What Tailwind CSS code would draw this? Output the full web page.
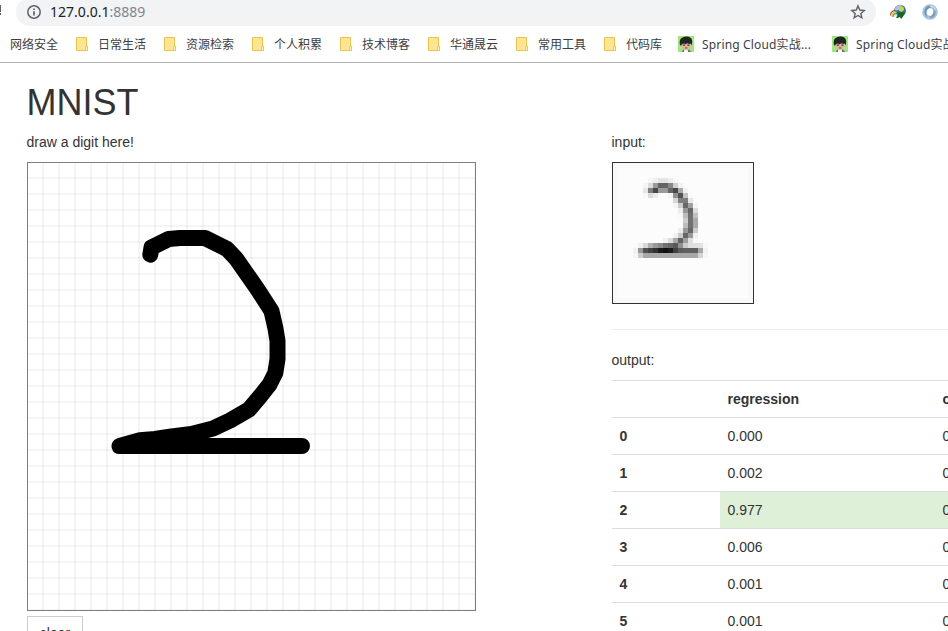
<!DOCTYPE html>
<html lang="zh-CN">
<head>
<meta charset="utf-8">
<title>MNIST</title>
<script src="https://cdn.jsdelivr.net/npm/@tailwindcss/browser@4"></script>
</head>
<body class="w-[948px] h-[631px] overflow-hidden bg-white text-[#333] font-['Liberation_Sans',Arial,sans-serif]">
<svg class="hidden">
  <symbol id="folder" viewBox="0 0 12 14"><path d="M.5.5h10v9h1v4H.5z" fill="#ffe591" stroke="#e8c64c"/><path d="M9.5 9.5h2v4h-2z" fill="#fff0b8" stroke="#e8c64c" stroke-width=".8"/></symbol>
  <symbol id="avatar" viewBox="0 0 16 16">
    <path d="M0 0h16v16H0z" fill="#a0e87c"/>
    <path d="M4 16c.4-2.2 1.5-3 4-3s4.300.8 5 3z" fill="#68788c"/>
    <path d="M6.500 13h3l.5 3H6z" fill="#fff"/>
    <path d="M3.500 6h9.200v4.500c0 2.200-2 3.500-4.500 3.500s-4.700-1.300-4.700-3.500z" fill="#dcb8a0"/>
    <path d="M2.200 9.500C1 5 2.200 2.500 4.500 1.500 7 0 10.500.2 12.500 1.800c2 1.500 2 4.300 1.200 7.700l-1-2-1.700.5-1.500-.8-2 1-1.500-.8-2 .6-.8 1.500z" fill="#202424"/>
    <path d="M4.800 9.200h2.200M9.300 9.200h2.200" stroke="#443330" stroke-width="1.300"/>
    <path d="M7 11.300h2.300v1.200H7z" fill="#e02c20"/>
  </symbol>
</svg>

<header class="h-[63px] border-b border-[#b0b0b0] font-['Noto_Sans','Noto_Sans_CJK_SC',sans-serif]">
  <div class="flex h-[26px]">
    <div class="w-4 relative overflow-hidden"><span class="absolute left-[-1px] top-[5px] h-[7px] w-[2px] bg-[#5f6368]"></span><span class="absolute left-[-1px] top-[13px] h-[2px] w-[2px] bg-[#5f6368]"></span></div>
    <div class="-mt-[2px] flex h-[28px] w-[860px] items-center rounded-full bg-[#f1f3f4] pl-[11px] pr-[10px]">
      <svg class="h-[14px] w-[14px]" viewBox="0 0 14 14" fill="none" stroke="#5f6368"><circle cx="7" cy="7" r="6.200" stroke-width="1.500"/><path d="M7 6.200v4.300M7 3.500v1.500" stroke-width="1.700"/></svg>
      <span class="ml-[9px] text-[14px] leading-[20px] tracking-[0.02px] text-[#202124]">127.0.0.1<span class="text-[#80868b]">:8889</span></span>
      <svg class="ml-auto h-4 w-4" viewBox="0 0 16 16" fill="none" stroke="#5f6368" stroke-width="1.400"><path d="M8 1.900l1.750 4.150 4.500.4-3.400 2.950 1 4.400L8 11.450 4.150 13.800l1-4.400-3.400-2.950 4.500-.4z"/></svg>
    </div>
    <svg class="ml-[14px] mt-1 h-4 w-4" viewBox="0 0 16 16">
      <circle cx="10" cy="6.600" r="5.900" fill="#3068b4"/>
      <path d="M5.500 3C7.500.8 10 .5 12 1.500L11 5 7 6.500 4.500 6z" fill="#a4c8ec"/>
      <path d="M8.500 4l3-2 2 1 .8 2.500-2.300 2.500-3-1z" fill="#d5cf3c"/>
      <path d="M.8 11.500C.3 8.300 2.800 6.300 6 6.800" fill="none" stroke="#d0472f" stroke-width="1.300"/>
      <path d="M1.800 12.300C1.600 9.500 3.500 7.800 6.500 8.200" fill="none" stroke="#f0d83a" stroke-width="1.500"/>
      <path d="M3 13c0-2.300 1-3.500 3.500-3.500" fill="none" stroke="#56aa48" stroke-width="1.400"/>
      <path d="M4.300 13.300c0-1.600.8-2.400 2.500-2.500" fill="none" stroke="#d9e8f4" stroke-width="1.400"/>
      <path d="M7 8l8.500.7-4.200 6.300-1.600-2-2.700 1.200-1-1 2.500-2.500z" fill="#106c18"/>
    </svg>
    <svg class="ml-4 mt-1 h-4 w-4" viewBox="0 0 16 16" fill="none">
      <circle cx="8" cy="8" r="5.700" stroke="#a9c3de" stroke-width="4.200"/><path d="M7 1.500C2 3 .5 10 5.500 13.500 3.500 9 4 5 9 3.500" fill="#7096bd"/><path d="M9 14.500c5-1.500 6.500-8 2-11.500 1.500 4 .5 8-4 9.500" fill="#7f9fc0"/><path d="M8 2.200a5.800 5.800 0 0 1 5.500 4" stroke="#c6d9ec" stroke-width="1.500"/><ellipse cx="8" cy="8" rx="2.600" ry="3.800" fill="#fff"/>
    </svg>
  </div>
  <nav class="flex h-[36px] items-center whitespace-nowrap pl-[10px] text-[12px] leading-[18px] text-[#3c4043]">
    <span class="w-[66px] shrink-0 pt-[2px]">网络安全</span>
    <span class="flex w-[88px] shrink-0 items-center gap-[10px]"><svg class="h-[14px] w-[12px]"><use href="#folder"/></svg><span class="pt-[2px]">日常生活</span></span>
    <span class="flex w-[88px] shrink-0 items-center gap-[10px]"><svg class="h-[14px] w-[12px]"><use href="#folder"/></svg><span class="pt-[2px]">资源检索</span></span>
    <span class="flex w-[88px] shrink-0 items-center gap-[10px]"><svg class="h-[14px] w-[12px]"><use href="#folder"/></svg><span class="pt-[2px]">个人积累</span></span>
    <span class="flex w-[88px] shrink-0 items-center gap-[10px]"><svg class="h-[14px] w-[12px]"><use href="#folder"/></svg><span class="pt-[2px]">技术博客</span></span>
    <span class="flex w-[88px] shrink-0 items-center gap-[10px]"><svg class="h-[14px] w-[12px]"><use href="#folder"/></svg><span class="pt-[2px]">华通晟云</span></span>
    <span class="flex w-[88px] shrink-0 items-center gap-[10px]"><svg class="h-[14px] w-[12px]"><use href="#folder"/></svg><span class="pt-[2px]">常用工具</span></span>
    <span class="flex w-[74px] shrink-0 items-center gap-[10px]"><svg class="h-[14px] w-[12px]"><use href="#folder"/></svg><span class="pt-[2px]">代码库</span></span>
    <span class="flex w-[154px] shrink-0 items-center gap-2"><svg class="h-4 w-4"><use href="#avatar"/></svg><span class="pt-[2px] tracking-[0.16px]">Spring Cloud实战...</span></span>
    <span class="flex w-[116px] shrink-0 items-center gap-2 overflow-hidden"><svg class="h-4 w-4 shrink-0"><use href="#avatar"/></svg><span class="pt-[2px] tracking-[0.16px]">Spring Cloud实战...</span></span>
  </nav>
</header>

<main class="overflow-hidden pl-[26.500px] pt-5 text-[14px] leading-[20px]">
  <h1 class="mb-[9px] h-10 text-[36px] leading-[40px]">MNIST</h1>
  <div class="flex">
    <section class="w-[585px] shrink-0">
      <p class="mb-[10px]">draw a digit here!</p>
      <svg class="ml-[0.500px] block h-[449px] w-[449px]" viewBox="0 0 449 449" fill="none">
        <defs><pattern id="grid" width="16" height="16" patternUnits="userSpaceOnUse"><path d="M0 0h1v16H0zM15 0h1v16h-1z" fill="#000" fill-opacity=".04"/><path d="M0 0h16v1H0zM0 15h16v1H0z" fill="#000" fill-opacity=".04"/></pattern></defs>
        <path d="M0 0h449v449H0z" fill="url(#grid)"/>
        <path d="M.5.5h448v448H.5z" stroke="#7f7f7f" shape-rendering="crispEdges"/>
        <path transform="translate(-27 -162)" d="M150.300 254.700L151.500 247.500 168.700 239 180 238H205L227 249 236 258.500 258 290 271.500 311 275.500 328.500 277.500 341V359L275.300 373 269.500 384.500 260 396.500 249 409.500 230 420.500 213 428.500 191.500 434 171.700 436.500 155 439 140 440.300 119.500 446H302" stroke="#000" stroke-width="16" stroke-linecap="round" stroke-linejoin="round"/>
      </svg>
      <button class="ml-[0.500px] mt-[5px] h-[34px] w-[56px] border border-[#ccc] bg-white text-[14px] leading-[20px]">clear</button>
    </section>
    <section class="w-[540px] shrink-0">
      <p class="mb-[10px]">input:</p>
      <svg id="input" class="ml-[0.500px] block h-[142px] w-[142px] border border-[#333] bg-[#fcfcfc]" viewBox="0 0 28 28" shape-rendering="crispEdges"><path d="M.5.5h27v27H.5z" fill="none" stroke="#f9f9f9"/></svg>
      <hr class="ml-[0.500px] mb-5 mt-[25px] border-t border-[#eee]">
      <p class="mb-[10px]">output:</p>
      <table class="ml-[0.500px] w-[540px] table-fixed border-collapse text-left">
        <colgroup><col class="w-[108px]"><col class="w-[215px]"><col class="w-[217px]"></colgroup>
        <tbody>
          <tr class="h-[37px] border-t border-[#ddd]"><th class="pl-[7.500px]"></th><th class="pl-[7.500px]">regression</th><th class="pl-[7.500px]">convolutional</th></tr>
          <tr class="h-[37px] border-t border-[#ddd]"><th class="pl-[7.500px]">0</th><td class="pl-[7.500px]">0.000</td><td class="pl-[7.500px]">0.000</td></tr>
          <tr class="h-[37px] border-t border-[#ddd]"><th class="pl-[7.500px]">1</th><td class="pl-[7.500px]">0.002</td><td class="pl-[7.500px]">0.000</td></tr>
          <tr class="h-[37px] border-t border-[#ddd]"><th class="pl-[7.500px]">2</th><td class="bg-[#dff0d8] pl-[7.500px]">0.977</td><td class="bg-[#dff0d8] pl-[7.500px]">0.999</td></tr>
          <tr class="h-[37px] border-t border-[#ddd]"><th class="pl-[7.500px]">3</th><td class="pl-[7.500px]">0.006</td><td class="pl-[7.500px]">0.000</td></tr>
          <tr class="h-[37px] border-t border-[#ddd]"><th class="pl-[7.500px]">4</th><td class="pl-[7.500px]">0.001</td><td class="pl-[7.500px]">0.000</td></tr>
          <tr class="h-[37px] border-t border-[#ddd]"><th class="pl-[7.500px]">5</th><td class="pl-[7.500px]">0.001</td><td class="pl-[7.500px]">0.000</td></tr>
        </tbody>
      </table>
    </section>
  </div>
</main>
<script>
  // Rows of the 28x28 sample: [row, first column, grey levels]
  const rows = [
    [3, 7, 'f5 ee e4 e4 ee f8'],
    [4, 6, 'f5 dc 99 64 64 88 d0 f3'],
    [5, 6, 'e6 80 48 99 99 66 48 aa f1'],
    [6, 6, 'f8 dc ec fc fc f5 90 52 c4 fa'],
    [7, 12, 'd6 80 7c e8'],
    [8, 12, 'f5 cc 68 a0 f5'],
    [9, 13, 'ee 98 66 dc'],
    [10, 13, 'f8 bc 70 c0'],
    [11, 14, 'cc 72 aa'],
    [12, 14, 'bc 72 aa'],
    [13, 13, 'ee 98 66 cc'],
    [14, 12, 'f0 cc 66 99 f1'],
    [15, 10, 'f2 dc a8 64 a0 e0 fa'],
    [16, 5, 'f0 d8 b0 99 88 72 66 58 90 cc e0 e0 e4 f8'],
    [17, 4, 'f1 98 52 42 32 18 10 1a 40 5c 60 60 60 a8 f2'],
    [18, 4, 'f5 cc a8 a8 a8 a8 a8 a8 a8 a8 a8 a8 a8 d4 f6']
  ];
  const input = document.getElementById('input');
  for (const [y, x0, levels] of rows) {
    levels.split(' ').forEach((v, i) => {
      const r = document.createElementNS('http://www.w3.org/2000/svg', 'rect');
      r.setAttribute('x', x0 + i);
      r.setAttribute('y', y);
      r.setAttribute('width', 1);
      r.setAttribute('height', 1);
      r.setAttribute('fill', '#' + v + v + v);
      input.appendChild(r);
    });
  }
</script>
</body>
</html>
